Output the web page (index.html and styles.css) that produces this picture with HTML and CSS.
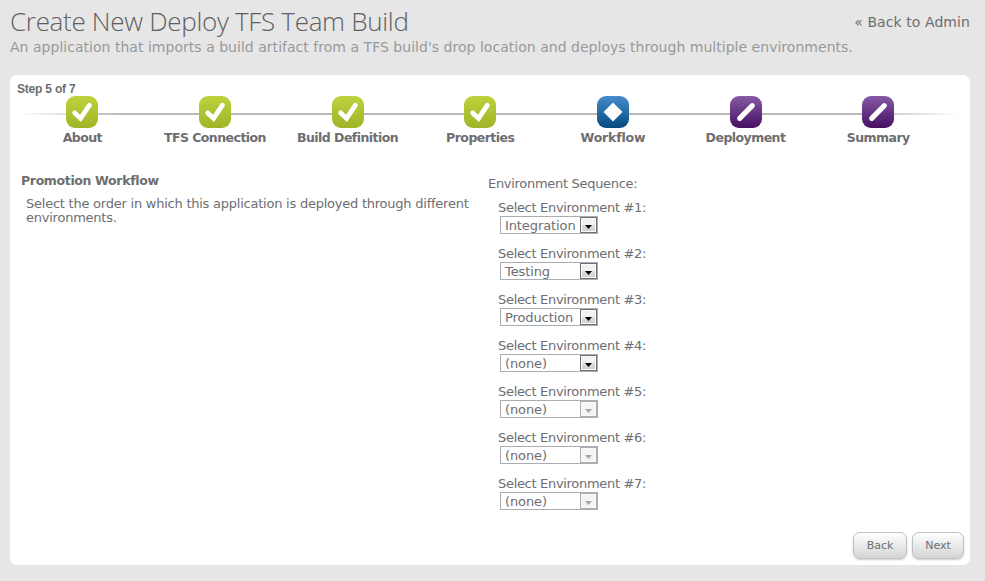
FILE: index.html
```html
<!DOCTYPE html>
<html lang="en">
<head>
<meta charset="utf-8">
<title>Create New Deploy TFS Team Build</title>
<link rel="stylesheet" href="styles.css">
</head>
<body>
<svg class="defs" width="0" height="0" aria-hidden="true">
  <defs>
    <linearGradient id="green" x2="0" y2="1"><stop offset="0" stop-color="#bdd23d"/><stop offset="1" stop-color="#a0b428"/></linearGradient>
    <linearGradient id="blue" x2="0" y2="1"><stop offset="0" stop-color="#468ccc"/><stop offset="1" stop-color="#044b7f"/></linearGradient>
    <linearGradient id="purple" x2="0" y2="1"><stop offset="0" stop-color="#865ba6"/><stop offset="1" stop-color="#460e62"/></linearGradient>
    <symbol id="done" viewBox="0 0 32 32"><rect width="32" height="32" rx="9" fill="url(#green)"/><path d="M8.700 16.900L14.600 22.400L23.400 9.200" fill="none" stroke="#fff" stroke-width="4.800" stroke-linecap="round" stroke-linejoin="miter"/></symbol>
    <symbol id="current" viewBox="0 0 32 32"><rect width="32" height="32" rx="9" fill="url(#blue)"/><path d="M16 6.500L25.500 16L16 25.500L6.500 16Z" fill="#fff"/></symbol>
    <symbol id="pending" viewBox="0 0 32 32"><rect width="32" height="32" rx="9" fill="url(#purple)"/><path d="M9.700 22.300L22.300 9.700" stroke="#fff" stroke-width="5.200" stroke-linecap="round"/></symbol>
  </defs>
</svg>
<header class="header">
  <div class="title-row">
    <h1>Create New Deploy TFS Team Build</h1>
    <a class="back-link">« Back to Admin</a>
  </div>
  <p class="subtitle">An application that imports a build artifact from a TFS build's drop location and deploys through multiple environments.</p>
</header>
<main class="card">
  <div class="step-count">Step 5 of 7</div>
  <ol class="steps">
    <li><svg><use href="#done"/></svg><span>About</span></li>
    <li><svg><use href="#done"/></svg><span>TFS Connection</span></li>
    <li><svg><use href="#done"/></svg><span>Build Definition</span></li>
    <li><svg><use href="#done"/></svg><span>Properties</span></li>
    <li><svg><use href="#current"/></svg><span class="wide">Workflow</span></li>
    <li><svg><use href="#pending"/></svg><span>Deployment</span></li>
    <li><svg><use href="#pending"/></svg><span>Summary</span></li>
  </ol>
  <div class="content">
    <section class="intro">
      <h2>Promotion Workflow</h2>
      <p>Select the order in which this application is deployed through different<br>environments.</p>
    </section>
    <section class="form">
      <div class="form-title">Environment Sequence:</div>
      <div class="field"><label>Select Environment #1:</label><div class="select"><span>Integration</span><i></i></div></div>
      <div class="field"><label>Select Environment #2:</label><div class="select"><span>Testing</span><i></i></div></div>
      <div class="field"><label>Select Environment #3:</label><div class="select"><span>Production</span><i></i></div></div>
      <div class="field"><label>Select Environment #4:</label><div class="select"><span>(none)</span><i></i></div></div>
      <div class="field"><label>Select Environment #5:</label><div class="select disabled"><span>(none)</span><i></i></div></div>
      <div class="field"><label>Select Environment #6:</label><div class="select disabled"><span>(none)</span><i></i></div></div>
      <div class="field"><label>Select Environment #7:</label><div class="select disabled"><span>(none)</span><i></i></div></div>
    </section>
  </div>
  <footer class="actions"><button class="back">Back</button><button class="next">Next</button></footer>
</main>
</body>
</html>
```
FILE: styles.css
```css
* { box-sizing: border-box; }
body {
  margin: 0;
  padding: 0 15px 16px 10px;
  height: 581px;
  display: flex;
  flex-direction: column;
  overflow: hidden;
  background: #e6e6e6;
  color: #6d6e71;
  font: 13px/14px "DejaVu Sans", sans-serif;
  white-space: nowrap;
}
h1, h2, p, ol { margin: 0; padding: 0; }
.defs { position: absolute; }
.header { height: 75px; }
.title-row { display: flex; justify-content: space-between; height: 38px; }
h1 { font: 300 26px/42px "Open Sans", sans-serif; letter-spacing: -.31px; color: #5f6063; }
.back-link { font-size: 14px; line-height: 44px; letter-spacing: .08px; }
.subtitle { font-size: 14px; line-height: 18px; letter-spacing: .025px; color: #999; }
.card {
  height: 490px;
  display: flex;
  flex-direction: column;
  background: #fff;
  border-radius: 7px;
}
.step-count {
  height: 21px;
  padding-left: 7px;
  font: bold 12px/28px "Liberation Sans", sans-serif;
  letter-spacing: -.2px;
}
.steps {
  display: grid;
  grid-template-columns: repeat(7, 132.65px);
  height: 80px;
  padding-left: 6px;
  list-style: none;
  background: linear-gradient(90deg, #fff 10px, #b9b9b9 110px, #b9b9b9 850px, #fff 950px) 0 17px / 100% 2px no-repeat;
}
.steps li { display: flex; flex-direction: column; align-items: center; font-weight: bold; }
.steps svg { width: 32px; height: 32px; margin-bottom: 3px; }
.steps span { font-size: 12.5px; letter-spacing: -.54px; }
.steps .wide { letter-spacing: -.18px; }
.content { display: flex; flex: 1; }
.intro { width: 478px; padding-left: 11px; }
h2 { font-size: 12.5px; line-height: 14px; margin-top: -2px; letter-spacing: -.35px; }
.intro p { padding: 9px 0 0 5px; letter-spacing: -.235px; }
.form-title { height: 25px; line-height: 16px; letter-spacing: -.3px; }
.field { height: 46px; padding-left: 10px; }
.field label { display: block; height: 15px; line-height: 14px; letter-spacing: -.31px; }
.select {
  display: flex;
  width: 98px;
  height: 18px;
  margin-left: 2px;
  border: 1px solid #abadb3;
}
.select span { flex: 1; padding-left: 4px; line-height: 18px; letter-spacing: -.1px; }
.select i {
  display: grid;
  justify-content: center;
  width: 17px;
  height: 16px;
  border: 1px solid #707070;
  box-shadow: inset 0 0 0 1px #fafafa;
  background: linear-gradient(#f2f2f2 50%, #dedede 50%, #cfcfcf);
}
.select i::after {
  content: "";
  width: 7px;
  height: 4px;
  margin-top: 7px;
  background: #000;
  clip-path: polygon(0 0, 100% 0, 50% 100%);
}
.select.disabled i { border-color: #abadb3; background: #f4f4f4; }
.select.disabled i::after { background: #a8a8a8; }
.actions { display: flex; justify-content: flex-end; gap: 5px; padding: 0 6px 6px 0; }
button {
  height: 27px;
  padding: 0;
  border: 1px solid #c0c0c0;
  border-radius: 7px;
  background: linear-gradient(#fff, #d3d4d5);
  box-shadow: 0 1px 2px rgba(0, 0, 0, .2);
  color: #6d6e71;
  font: 11px/25px "DejaVu Sans", sans-serif;
}
.back { width: 54px; }
.next { width: 52px; }
```
